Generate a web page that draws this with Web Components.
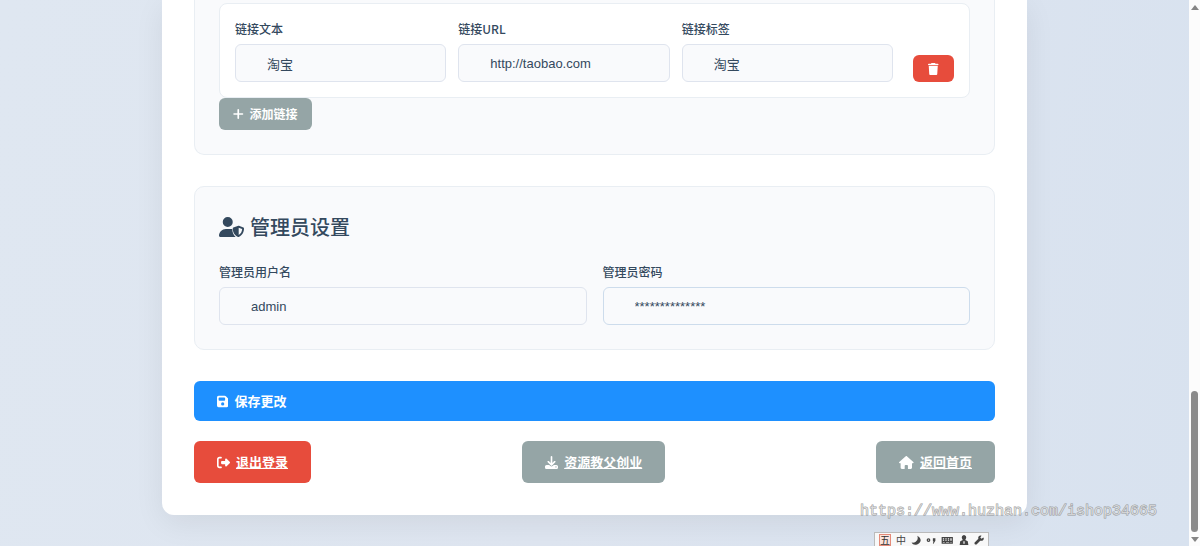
<!DOCTYPE html>
<html lang="zh-CN">
<head>
<meta charset="UTF-8">
<meta name="viewport" content="width=device-width, initial-scale=1.0">
<title>管理员设置</title>
<style>
  body {
    margin: 0;
    color: #34495e;
    font-family: "Noto Sans CJK SC", sans-serif;
    font-size: 13px;
  }
</style>
</head>
<body>
<settings-app></settings-app>

<script>
const ICONS = {
  plus: ['0 0 448 512', 'M260 76c0-20-16-36-36-36s-36 16-36 36v144H44c-20 0-36 16-36 36s16 36 36 36h144v144c0 20 16 36 36 36s36-16 36-36V292h144c20 0 36-16 36-36s-16-36-36-36H260V76z'],
  trash: ['0 0 448 512', 'M135 18L128 32H32C14 32 0 46 0 64s14 32 32 32h384c18 0 32-14 32-32s-14-32-32-32h-96l-7-14C307 7 296 0 284 0H164c-12 0-23 7-29 18zM416 128H32l21 339c2 25 23 45 48 45h246c25 0 46-20 48-45l21-339z'],
  'user-shield': ['0 0 640 512', 'M224 256a128 128 0 1 0 0-256 128 128 0 1 0 0 256zm-46 48C80 304 0 384 0 482c0 17 13 30 30 30h388c3 0 6 0 9-1-52-44-83-115-88-190-1-5-1-10 1-15-10-1-19-2-29-2H178zM496 225c5-2 11-2 16 0l112 45c10 4 16 13 16 23 0 76-31 173-135 217-6 3-12 3-18 0-104-44-135-141-135-217 0-10 6-19 16-23zM504 273v187c61-29 84-92 88-152z'],
  save: ['0 0 448 512', 'M64 32C29 32 0 61 0 96v320c0 35 29 64 64 64h320c35 0 64-29 64-64V174c0-17-7-33-19-45l-78-78c-12-12-28-19-45-19H64zM64 128c0-18 14-32 32-32h192c18 0 32 14 32 32v64c0 18-14 32-32 32H96c-18 0-32-14-32-32v-64zm160 160a64 64 0 1 1 0 128 64 64 0 1 1 0-128z'],
  logout: ['0 0 512 512', 'M378 105l121 121c8 8 13 19 13 30s-5 22-13 30L378 407c-6 6-15 10-24 10-19 0-34-15-34-34v-63H192c-18 0-32-14-32-32v-64c0-18 14-32 32-32h128v-63c0-19 15-34 34-34 9 0 18 4 24 10zM160 96H96c-18 0-32 14-32 32v256c0 18 14 32 32 32h64c18 0 32 14 32 32s-14 32-32 32H96c-53 0-96-43-96-96V128c0-53 43-96 96-96h64c18 0 32 14 32 32s-14 32-32 32z'],
  download: ['0 0 512 512', 'M288 32c0-18-14-32-32-32s-32 14-32 32v243l-73-74c-13-12-33-12-46 0-12 13-12 33 0 46l128 128c13 12 33 12 46 0l128-128c12-13 12-33 0-46-13-12-33-12-46 0l-73 74V32zM64 352c-35 0-64 29-64 64v32c0 35 29 64 64 64h384c35 0 64-29 64-64v-32c0-35-29-64-64-64H347l-46 45c-25 25-65 25-90 0l-46-45H64zm368 56a24 24 0 1 1 0 48 24 24 0 1 1 0-48z'],
  home: ['0 0 576 512', 'M576 256c0 18-15 32-32 32h-32v176c0 27-21 48-48 48h-88c-14 0-24-10-24-24v-104c0-18-14-32-32-32h-64c-18 0-32 14-32 32v104c0 14-10 24-24 24h-88c-27 0-48-21-48-48V288H32c-18 0-32-14-32-32 0-9 3-17 10-24L266 8c7-7 15-8 22-8s15 2 21 7l256 225c8 7 12 15 11 24z'],
  moon: ['0 0 16 16', 'M10 1c6 3 7 9 3 12-5 4-10 3-12-1 4 1 7-1 9-4 1-2 1-5 0-7z'],
  comma: ['0 0 16 16', 'M4 5a3 3 0 1 0 0 6 3 3 0 0 0 0-6zm0 2a1 1 0 1 1 0 2 1 1 0 0 1 0-2zM11 5h4v4l-3 5h-1l1-4h-1z'],
  keyboard: ['0 0 20 16', 'M1 3h18v11H1zM3 5v2h2V5zm4 0v2h2V5zm4 0v2h2V5zm4 0v4h2V5zM3 8v1h2V8zm4 0v1h2V8zm4 0v1h2V8zM3 11v1h3v-1zm5 0v1h5v-1zm7 0v1h2v-1z'],
  person: ['0 0 16 16', 'M8 0a4 4 0 0 1 3 6l-1 2 4 2 1 6H1l1-6 4-2-1-2a4 4 0 0 1 3-6zM7 10v4h2v-4z'],
  wrench: ['0 0 16 16', 'M15 4l-3 2-2-2 2-3c-4-1-6 2-5 5L1 12c-1 2 1 4 3 3l6-6c4 1 7-2 5-5z'],
};

class UiIcon extends HTMLElement {
  constructor() {
    super();
    this.attachShadow({ mode: 'open' });
  }

  connectedCallback() {
    const [box, path] = ICONS[this.getAttribute('name')];
    this.shadowRoot.innerHTML = `
      <style>
        :host { display: inline-flex; flex: none; }
        svg { display: block; height: var(--icon-size, 13px); fill: currentColor; }
      </style>
      <svg viewBox="${box}" aria-hidden="true"><path fill-rule="evenodd" d="${path}"/></svg>
    `;
  }
}

class TextField extends HTMLElement {
  constructor() {
    super();
    this.attachShadow({ mode: 'open' });
  }

  connectedCallback() {
    this.shadowRoot.innerHTML = `
      <style>
        :host { display: flex; flex: 1; flex-direction: column; gap: 5px; min-width: 0; }
        label { font-size: 12px; line-height: 20px; font-weight: 500; }
        input {
          box-sizing: border-box;
          width: 100%;
          height: 38px;
          padding: 0 31px;
          border: 1px solid var(--field-border, #dfe4ee);
          border-radius: 6px;
          background: #f9fafc;
          color: #34495e;
          font: 13px "Liberation Sans", "Noto Sans CJK SC", sans-serif;
          outline: none;
        }
      </style>
      <label for="field">${this.getAttribute('label')}</label>
      <input id="field" type="text" value="${this.getAttribute('value')}">
    `;
  }
}

class UiButton extends HTMLElement {
  constructor() {
    super();
    this.attachShadow({ mode: 'open' });
  }

  connectedCallback() {
    const href = this.getAttribute('href');
    const label = this.getAttribute('label');
    const open = href ? `<a class="box" href="${href}">` : `<button class="box" type="button"${label ? ` aria-label="${label}"` : ''}>`;
    this.shadowRoot.innerHTML = `
      <style>
        :host { display: block; --bg: #95a5a6; }
        :host([kind="danger"]) { --bg: #e74c3c; }
        :host([kind="primary"]) { --bg: #1e90ff; }
        .box {
          display: flex;
          align-items: center;
          gap: 6px;
          box-sizing: border-box;
          width: 100%;
          height: 42px;
          padding: 0 23px;
          border: 0;
          border-radius: 6px;
          background: var(--bg);
          color: #fff;
          font: inherit;
          font-weight: 700;
          line-height: 20px;
          text-decoration: none;
          cursor: pointer;
        }
        a .text { text-decoration: underline; }
        :host([kind="primary"]) .box { height: 40px; }
        :host([size="small"]) .box { height: 32px; padding: 0 14px; font-size: 12px; --icon-size: 12px; }
        :host([size="icon"]) .box { width: 41px; height: 27px; padding: 0; justify-content: center; --icon-size: 12px; }
        :host([size="icon"]) .text { display: none; }
      </style>
      ${open}<ui-icon name="${this.getAttribute('icon')}"></ui-icon><span class="text"><slot></slot></span>${href ? '</a>' : '</button>'}
    `;
  }
}

class SettingsSection extends HTMLElement {
  constructor() {
    super();
    this.attachShadow({ mode: 'open' });
    this.shadowRoot.innerHTML = `
      <style>
        :host {
          display: block;
          padding: 24px;
          border: 1px solid #e9eef3;
          border-radius: 10px;
          background: #f9fafc;
        }
        :host([continued]) { padding-top: 3px; border-top: 0; border-radius: 0 0 10px 10px; }
      </style>
      <slot></slot>
    `;
  }
}

class ImeBar extends HTMLElement {
  constructor() {
    super();
    this.attachShadow({ mode: 'open' });
    this.shadowRoot.innerHTML = `
      <style>
        :host {
          display: flex;
          align-items: center;
          justify-content: space-between;
          box-sizing: border-box;
          width: 115px;
          height: 14px;
          padding: 0 4px;
          border: 1px solid #bbb;
          border-bottom: 0;
          background: #f8f8f8;
          color: #444;
          font-size: 10px;
          line-height: 10px;
          --icon-size: 10px;
        }
        .mode {
          border: 1px solid #e58a78;
          background: #fbe3dc;
          color: #333;
        }
      </style>
      <span class="mode">五</span><span>中</span>
      <ui-icon name="moon"></ui-icon>
      <ui-icon name="comma"></ui-icon>
      <ui-icon name="keyboard"></ui-icon>
      <ui-icon name="person"></ui-icon>
      <ui-icon name="wrench"></ui-icon>
    `;
  }
}

class PageScrollbar extends HTMLElement {
  constructor() {
    super();
    this.attachShadow({ mode: 'open' });
    this.shadowRoot.innerHTML = `
      <style>
        :host {
          display: flex;
          flex: none;
          flex-direction: column;
          align-items: center;
          box-sizing: border-box;
          width: 11px;
          padding: 5px 0 4px;
          background: #fcfcfc;
        }
        i { border: 4px solid transparent; }
        .up { border-top: 0; border-bottom: 5px solid #858585; }
        .down { border-bottom: 0; border-top: 5px solid #858585; }
        .track { display: flex; flex: 1; flex-direction: column; padding: 4px 0 5px; }
        .track::before { content: ""; flex: 379; }
        .thumb { flex: 142; width: 7px; border-radius: 4px; background: #8b8b8b; }
      </style>
      <i class="up"></i>
      <div class="track"><div class="thumb"></div></div>
      <i class="down"></i>
    `;
  }
}

class SettingsApp extends HTMLElement {
  constructor() {
    super();
    this.attachShadow({ mode: 'open' });
    this.shadowRoot.innerHTML = `
      <style>
        :host { display: flex; position: relative; height: 100vh; overflow: hidden; }
        .page {
          flex: 1;
          min-width: 0;
          overflow: hidden;
          background: linear-gradient(100deg, #dfe7f1, #dee5f0 50%, #d8e2ef);
        }
        main {
          display: flex;
          flex-direction: column;
          gap: 31px;
          box-sizing: border-box;
          max-width: 865px;
          margin: 0 auto;
          padding: 0 32px 32px;
          border-radius: 0 0 12px 12px;
          background: #fff;
          box-shadow: 0 8px 30px rgba(0, 0, 0, 0.07);
        }
        .link {
          display: flex;
          align-items: flex-end;
          gap: 12px;
          padding: 15px;
          border: 1px solid #e9eef3;
          border-radius: 8px;
          background: #fff;
        }
        .link ui-button { margin-left: 8px; }
        .add { width: fit-content; }
        h2 {
          display: flex;
          align-items: center;
          gap: 6px;
          margin: 0 0 19px;
          font-size: 20px;
          font-weight: 500;
          line-height: 32px;
          --icon-size: 20px;
        }
        .row { display: flex; gap: 16px; }
        .secret { --field-border: #cddcec; }
        .actions { display: grid; gap: 20px; }
        nav { display: flex; justify-content: space-between; }
        .watermark {
          position: absolute;
          right: 43px;
          bottom: 24px;
          color: rgba(255, 255, 255, 0.6);
          font: 15px/20px "Liberation Mono", monospace;
          -webkit-text-stroke: 1px rgba(130, 130, 130, 0.8);
          paint-order: stroke fill;
        }
        ime-bar { position: absolute; right: 211px; bottom: 0; }
      </style>
      <div class="page">
        <main>
          <settings-section continued>
            <div class="link">
              <text-field label="链接文本" value="淘宝"></text-field>
              <text-field label="链接URL" value="http://taobao.com"></text-field>
              <text-field label="链接标签" value="淘宝"></text-field>
              <ui-button kind="danger" size="icon" icon="trash" label="删除"></ui-button>
            </div>
            <ui-button class="add" size="small" icon="plus">添加链接</ui-button>
          </settings-section>
          <settings-section>
            <h2><ui-icon name="user-shield"></ui-icon>管理员设置</h2>
            <div class="row">
              <text-field label="管理员用户名" value="admin"></text-field>
              <text-field class="secret" label="管理员密码" value="**************"></text-field>
            </div>
          </settings-section>
          <div class="actions">
            <ui-button kind="primary" icon="save">保存更改</ui-button>
            <nav>
              <ui-button kind="danger" icon="logout" href="#logout">退出登录</ui-button>
              <ui-button icon="download" href="#download">资源教父创业</ui-button>
              <ui-button icon="home" href="#home">返回首页</ui-button>
            </nav>
          </div>
        </main>
      </div>
      <page-scrollbar></page-scrollbar>
      <span class="watermark">https://www.huzhan.com/ishop34665</span>
      <ime-bar></ime-bar>
    `;
  }
}

customElements.define('ui-icon', UiIcon);
customElements.define('text-field', TextField);
customElements.define('ui-button', UiButton);
customElements.define('settings-section', SettingsSection);
customElements.define('ime-bar', ImeBar);
customElements.define('page-scrollbar', PageScrollbar);
customElements.define('settings-app', SettingsApp);
</script>
</body>
</html>
